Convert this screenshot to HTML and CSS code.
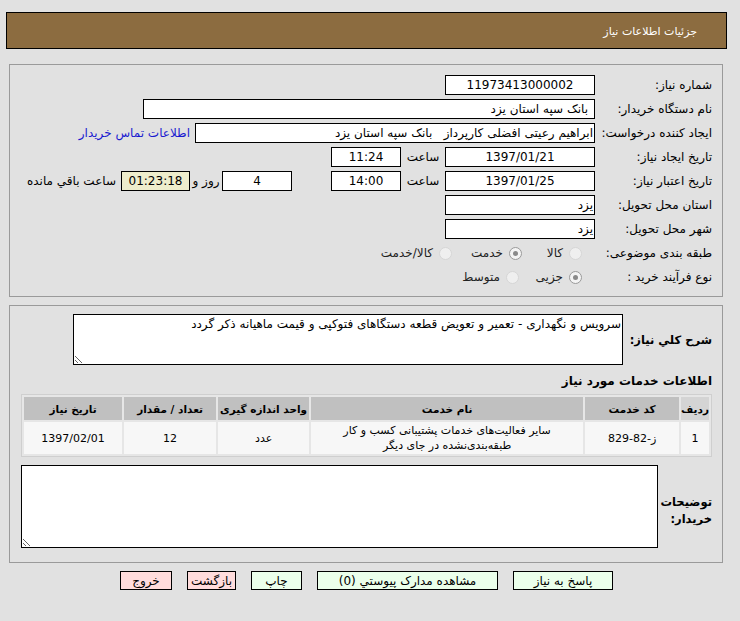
FILE: index.html
```html
<!DOCTYPE html>
<html lang="fa" dir="rtl">
<head>
<meta charset="utf-8">
<title>جزئیات اطلاعات نیاز</title>
<link rel="stylesheet" href="styles.css">
</head>
<body>
<div class="page">
  <div class="header">جزئیات اطلاعات نیاز</div>

  <div class="panel panel-top">
    <div class="row">
      <div class="lbl">شماره نیاز:</div>
      <div class="box w150 center">11973413000002</div>
    </div>
    <div class="row">
      <div class="lbl">نام دستگاه خریدار:</div>
      <div class="box w450">بانک سپه استان یزد</div>
    </div>
    <div class="row">
      <div class="lbl">ایجاد کننده درخواست:</div>
      <div class="box w400 tight">ابراهیم رعیتی افضلی کارپرداز&nbsp;&nbsp;&nbsp;بانک سپه استان یزد</div>
      <a class="link" href="#">اطلاعات تماس خریدار</a>
    </div>
    <div class="row">
      <div class="lbl">تاریخ ایجاد نیاز:</div>
      <div class="box w150 center">1397/01/21</div>
      <div class="mid">ساعت</div>
      <div class="box w70 center">11:24</div>
    </div>
    <div class="row">
      <div class="lbl">تاریخ اعتبار نیاز:</div>
      <div class="box w150 center">1397/01/25</div>
      <div class="mid">ساعت</div>
      <div class="box w70 center">14:00</div>
      <div class="box w70 center days">4</div>
      <div class="txt-days">روز و</div>
      <div class="box w69 center remain">01:23:18</div>
      <div class="txt-remain">ساعت باقي مانده</div>
    </div>
    <div class="row">
      <div class="lbl">استان محل تحویل:</div>
      <div class="box w146 tight">یزد</div>
    </div>
    <div class="row">
      <div class="lbl">شهر محل تحویل:</div>
      <div class="box w146 tight">یزد</div>
    </div>
    <div class="row">
      <div class="lbl">طبقه بندی موضوعی:</div>
      <div class="opts">
        <span class="opt o1"><span class="radio"></span>کالا</span>
        <span class="opt o2"><span class="radio on"></span>خدمت</span>
        <span class="opt"><span class="radio"></span>کالا/خدمت</span>
      </div>
    </div>
    <div class="row">
      <div class="lbl">نوع فرآیند خرید :</div>
      <div class="opts">
        <span class="opt o3"><span class="radio on"></span>جزیی</span>
        <span class="opt"><span class="radio"></span>متوسط</span>
      </div>
    </div>
  </div>

  <div class="panel panel-bottom">
    <div class="desc-row">
      <div class="blbl desc-lbl">شرح کلي نياز:</div>
      <textarea class="ta ta1" readonly>سرویس و نگهداری - تعمیر و تعویض قطعه دستگاهای فتوکپی و قیمت ماهیانه ذکر گردد</textarea>
    </div>
    <div class="section-title">اطلاعات خدمات مورد نیاز</div>
    <table class="grid">
      <thead>
        <tr>
          <th class="c1">ردیف</th>
          <th class="c2">کد خدمت</th>
          <th class="c3">نام خدمت</th>
          <th class="c4">واحد اندازه گیری</th>
          <th class="c5">تعداد / مقدار</th>
          <th class="c6">تاریخ نیاز</th>
        </tr>
      </thead>
      <tbody>
        <tr>
          <td>1</td>
          <td>ز-82-829</td>
          <td>سایر فعالیت‌های خدمات پشتیبانی کسب و کار<br>طبقه‌بندی‌نشده در جای دیگر</td>
          <td>عدد</td>
          <td>12</td>
          <td>1397/02/01</td>
        </tr>
      </tbody>
    </table>
    <div class="notes-row">
      <div class="blbl notes-lbl">توضیحات<br>خریدار:</div>
      <textarea class="ta ta2" readonly></textarea>
    </div>
  </div>

  <div class="buttons">
    <button class="btn green b-answer">پاسخ به نیاز</button>
    <button class="btn green b-docs">مشاهده مدارک پیوستي (0)</button>
    <button class="btn green b-print">چاپ</button>
    <button class="btn pink b-back">بازگشت</button>
    <button class="btn pink b-exit">خروج</button>
  </div>
</div>
</body>
</html>
```

FILE: styles.css
```css
html, body {
  margin: 0;
  padding: 0;
  background: #e1e1e1;
}
body {
  font-family: "DejaVu Sans", sans-serif;
  font-size: 11px;
  color: #000;
  direction: rtl;
}
.page {
  width: 721px;
  margin: 0 auto 0 6px;
  padding-top: 12px;
}
.header {
  height: 35px;
  line-height: 37px;
  border: 1px solid #000;
  background: #8c6c40;
  color: #fff;
  padding-right: 29px;
  font-size: 11px;
}
.panel {
  margin: 0 4px 0 3px;
  border: 1px solid #9a9a9a;
  background: #e1e1e1;
}
.panel-top {
  margin-top: 15px;
  padding: 8px 10px 5px 0;
  height: 218px;
}
.row {
  display: flex;
  align-items: center;
  height: 24px;
}
.lbl {
  width: 117px;
  flex: none;
  font-size: 12px;
  white-space: nowrap;
}
.box {
  height: 18px;
  line-height: 18px;
  border: 1px solid #000;
  background: #fff;
  font-size: 12px;
  padding: 0 4px;
  white-space: nowrap;
  overflow: hidden;
  box-sizing: content-box;
  flex: none;
}
.box.tight { padding: 0 1px; }
.center { text-align: center; }
.w150 { width: 140px; }
.w146 { width: 146px; }
.w450 { width: 440px; padding-right: 6px; }
.w400 { width: 396px; }
.w70 { width: 60px; }
.w69 { width: 59px; }
.link {
  margin-right: 5px;
  color: #1a1ad0;
  text-decoration: none;
  font-size: 12px;
  white-space: nowrap;
}
.mid {
  width: 44px;
  text-align: center;
  font-size: 12px;
  flex: none;
}
.days { margin-right: 39px; }
.txt-days {
  width: 32px;
  text-align: center;
  font-size: 12px;
  flex: none;
}
.remain { background: #eeedcc; }
.txt-remain {
  margin-right: 5px;
  font-size: 12px;
  white-space: nowrap;
}
.opts {
  display: flex;
  align-items: center;
  font-size: 12px;
  color: #222;
}
.opt {
  display: flex;
  align-items: center;
  white-space: nowrap;
}
.radio {
  width: 11px;
  height: 11px;
  border-radius: 50%;
  border: 1px solid #d6d6d6;
  background: #efefef;
  margin-left: 6px;
  margin-right: 13px;
  position: relative;
  flex: none;
}
.radio.on {
  border-color: #9a9a9a;
  background: #f4f4f4;
}
.radio.on::after {
  content: "";
  position: absolute;
  left: 3px;
  top: 3px;
  width: 5px;
  height: 5px;
  border-radius: 50%;
  background: #8a8a8a;
}
.o1 { width: 60px; }
.o2 { width: 70px; }
.o3 { width: 63px; }

.panel-bottom {
  margin-top: 8px;
  padding: 8px 10px 14px 11px;
}
.desc-row {
  display: flex;
  align-items: center;
}
.blbl {
  font-weight: bold;
  font-size: 12px;
  flex: none;
}
.desc-lbl {
  width: 88px;
  white-space: nowrap;
  font-size: 11.5px;
  letter-spacing: -0.3px;
}
.ta {
  border: 1px solid #000;
  background: #fff;
  font-family: "DejaVu Sans", sans-serif;
  font-size: 12px;
  direction: rtl;
  padding: 2px 1px;
  margin: 0;
  box-sizing: border-box;
  outline: none;
}
.ta1 {
  width: 550px;
  height: 51px;
  margin-right: 1px;
}
.section-title {
  font-weight: bold;
  font-size: 12px;
  margin-top: 9px;
  height: 20px;
  line-height: 14px;
}
.grid {
  width: 691px;
  border: 1px solid #cfcfcf;
  border-spacing: 2px;
  background: #e6e6e6;
  margin-right: 0;
  font-size: 11px;
}
.grid th {
  background: #c0c0c0;
  height: 23px;
  font-weight: bold;
  padding: 0;
  font-size: 10.5px;
  white-space: nowrap;
  letter-spacing: -0.2px;
}
.grid th.c1 { background: #d4d4d4; width: 25px; }
.grid th.c2 { width: 94px; }
.grid th.c3 { width: 272px; }
.grid th.c4 { width: 91px; }
.grid th.c5 { width: 92px; }
.grid td {
  background: #f7f7f7;
  text-align: center;
  height: 32px;
  padding: 0;
  line-height: 15px;
}
.notes-row {
  display: flex;
  align-items: center;
  margin-top: 8px;
}
.notes-lbl {
  width: 54px;
  line-height: 17px;
  margin-top: 8px;
  white-space: nowrap;
  font-size: 11.5px;
}
.ta2 {
  width: 637px;
  height: 83px;
}
.buttons {
  display: flex;
  justify-content: center;
  gap: 15px;
  margin-top: 8px;
  direction: rtl;
}
.btn {
  height: 19px;
  border: 1px solid #000;
  font-family: "DejaVu Sans", sans-serif;
  font-size: 12px;
  padding: 0;
  color: #000;
  line-height: 16px;
}
.green { background: #ebffeb; }
.pink { background: #ffdcdc; }
.b-answer { width: 100px; }
.b-docs { width: 181px; }
.b-print { width: 51px; }
.b-back { width: 49px; }
.b-exit { width: 52px; }
```
